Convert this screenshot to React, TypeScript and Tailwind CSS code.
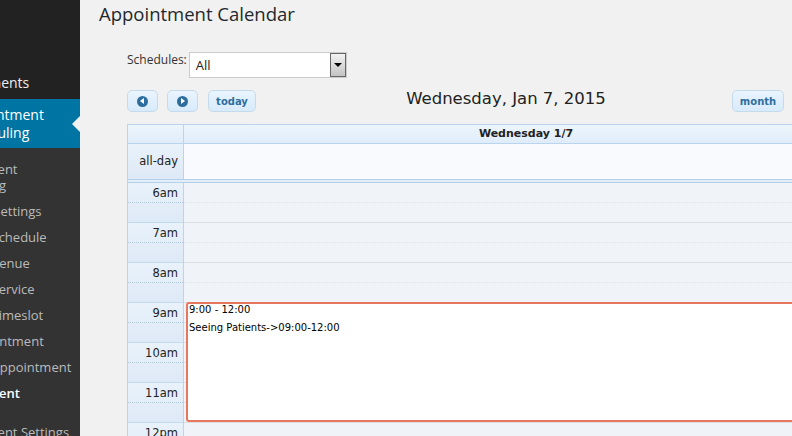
const hours = ["6am", "7am", "8am", "9am", "10am", "11am", "12pm"];

const subItems = [
  { label: "SMS Settings" },
  { label: "Add Schedule" },
  { label: "Add Venue" },
  { label: "Add Service" },
  { label: "Add Timeslot" },
  { label: "Appointment" },
  { label: "Add Appointment" },
];

function NavButton({ dir }: { dir: "prev" | "next" }) {
  return (
    <button className="flex h-[22px] w-[31px] items-center justify-center rounded-[5px] border border-[#c5dbec] bg-gradient-to-b from-[#e9f4fe] to-[#d8ebfb]">
      <span className="flex h-[11px] w-[11px] items-center justify-center rounded-full bg-[#2e6e9e]">
        {dir === "prev" ? (
          <span className="-ml-[1px] h-0 w-0 border-y-[3px] border-r-[4px] border-y-transparent border-r-white" />
        ) : (
          <span className="ml-[1px] h-0 w-0 border-y-[3px] border-l-[4px] border-y-transparent border-l-white" />
        )}
      </span>
    </button>
  );
}

function Sidebar() {
  return (
    <div className="flex h-[436px] w-[80px] shrink-0 flex-col overflow-hidden bg-[#222] font-['Open_Sans',sans-serif]">
      <div className="h-[65px] shrink-0" />
      <div className="flex h-[34px] shrink-0 items-center whitespace-nowrap text-[14px] text-[#eee]">
        <span className="-ml-[42px]">Comments</span>
      </div>
      <div className="relative flex h-[49px] shrink-0 flex-col justify-center bg-[#0074a2] text-[14px] leading-[18px] text-white">
        <span className="-ml-[42px] whitespace-nowrap">Appointment</span>
        <span className="-ml-[42px] whitespace-nowrap">Scheduling</span>
        <span className="absolute right-0 top-[17px] h-0 w-0 border-y-[8px] border-r-[8px] border-y-transparent border-r-[#f1f1f1]" />
      </div>
      <div className="flex-1 shrink-0 bg-[#333] pt-[8px] text-[13px] leading-[16px] text-[#bbb]">
        <div className="-ml-[36px] whitespace-nowrap py-[5px]">
          Payment
          <br />
          Setting
        </div>
        {subItems.map((s) => (
          <div key={s.label} className="-ml-[36px] whitespace-nowrap py-[5px]">
            {s.label}
          </div>
        ))}
        <div className="-ml-[36px] whitespace-nowrap py-[5px] font-semibold text-white">Payment</div>
        <div className="-ml-[36px] mt-[13px] whitespace-nowrap py-[5px]">Payment Settings</div>
      </div>
    </div>
  );
}

function Calendar() {
  return (
    <div className="mt-[12px] w-[741px] shrink-0 border-l border-[#b9d4ec] font-['DejaVu_Sans',sans-serif] text-[#222]">
      <div className="flex h-[20px] border-y border-[#b9d4ec] bg-gradient-to-b from-[#edf5fd] to-[#dfecf9]">
        <div className="w-[56px] shrink-0 border-r border-[#b9d4ec]" />
        <div className="flex-1 text-center text-[11px] font-bold leading-[18px]">Wednesday 1/7</div>
      </div>
      <div className="flex h-[35px]">
        <div className="flex w-[56px] shrink-0 items-center justify-end border-r border-[#b9d4ec] bg-gradient-to-b from-[#e9f2fb] to-[#dde9f6] pr-[5px] text-[11.5px]">
          all-day
        </div>
        <div className="flex-1 bg-[#f8fafd]" />
      </div>
      <div className="h-[4px] border-y border-[#b5d1ea] bg-[#e2eefa]" />
      <div className="relative">
        {hours.map((h) => (
          <div key={h} className="flex">
            <div className="w-[56px] shrink-0 border-r border-[#b9d4ec] bg-gradient-to-b from-[#e9f2fb] to-[#dde9f6]">
              <div className="h-[20px] border-b border-dotted border-[#b0c8de] pr-[5px] text-right text-[11.5px] leading-[20px]">
                {h}
              </div>
              <div className="h-[20px] border-b border-[#c5dbec]" />
            </div>
            <div className="flex-1 bg-[#f0f4f8]">
              <div className="h-[20px] border-b border-dotted border-[#dfe4e9]" />
              <div className="h-[20px] border-b border-[#dcdfe3]" />
            </div>
          </div>
        ))}
        <div className="absolute left-[58px] right-[2px] top-[119px] h-[120px] rounded-[3px] border-2 border-[#e8775f] bg-white px-[1px] text-[10px] leading-[13px] text-black">
          <div className="-mt-[1px]">9:00 - 12:00</div>
          <div className="mt-[5px]">Seeing Patients-&gt;09:00-12:00</div>
        </div>
      </div>
    </div>
  );
}

export default function App() {
  return (
    <div className="flex h-[436px] w-[792px] overflow-hidden bg-[#f1f1f1]">
      <Sidebar />
      <div className="min-w-0 flex-1 pl-[19px]">
        <h2 className="font-['Open_Sans',sans-serif] text-[18.5px] leading-[27px] text-[#23282d]">
          Appointment Calendar
        </h2>
        <div className="pl-[28px]">
          <div className="mt-[25px] flex items-start font-['Open_Sans',sans-serif]">
            <span className="text-[12px] leading-[16px] text-[#333]">Schedules:</span>
            <div className="ml-[2px] flex h-[26px] w-[158px] items-stretch border border-[#ccc] bg-white">
              <span className="flex-1 pl-[6px] text-[13px] leading-[24px] text-[#222]">All</span>
              <span className="flex w-[16px] items-center justify-center border border-[#666] bg-gradient-to-b from-[#f2f2f2] to-[#c4c4c4]">
                <span className="h-0 w-0 border-x-[4px] border-t-[4px] border-x-transparent border-t-black" />
              </span>
            </div>
          </div>
          <div className="mt-[12px] flex w-[657px] items-start font-['DejaVu_Sans',sans-serif]">
            <div className="flex gap-[9px]">
              <NavButton dir="prev" />
              <NavButton dir="next" />
              <button className="ml-[1px] h-[22px] w-[48px] rounded-[5px] border border-[#c5dbec] bg-gradient-to-b from-[#e9f4fe] to-[#d8ebfb] text-[10px] font-bold text-[#2e6e9e]">
                today
              </button>
            </div>
            <div className="flex-1 pl-[24px] text-center text-[16.5px] leading-[18px] text-[#222]">
              Wednesday, Jan 7, 2015
            </div>
            <button className="h-[22px] w-[52px] rounded-[5px] border border-[#c5dbec] bg-gradient-to-b from-[#e9f4fe] to-[#d8ebfb] text-[10px] font-bold text-[#2e6e9e]">
              month
            </button>
          </div>
          <Calendar />
        </div>
      </div>
    </div>
  );
}
